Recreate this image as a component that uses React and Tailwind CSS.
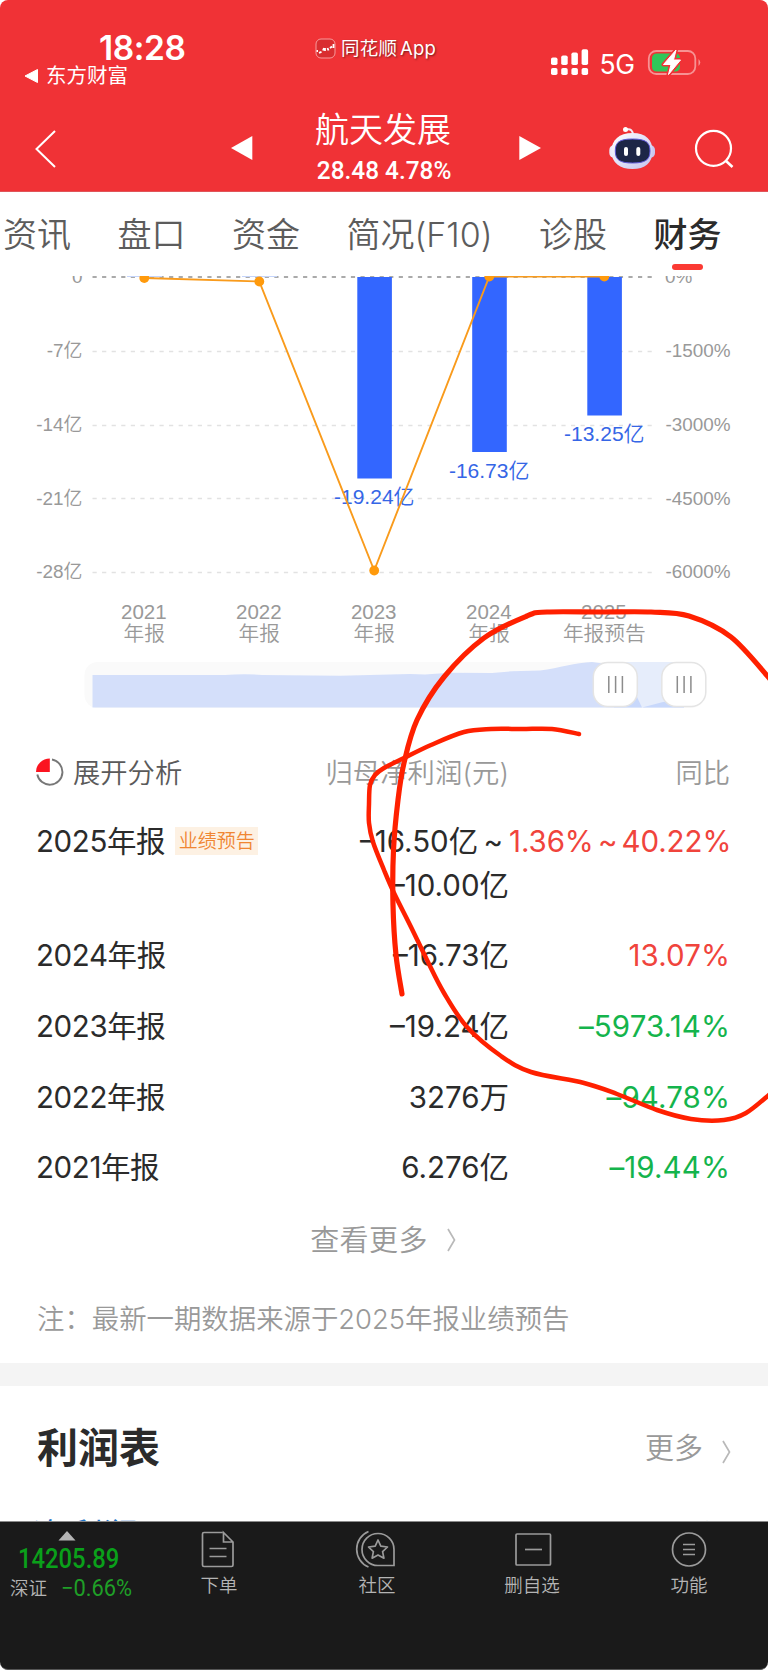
const tabs = ['资讯', '盘口', '资金', '简况(F10)', '诊股'];

const gridRows = [
  { y: 351.5, left: '-7亿', right: '-1500%', base: 357 },
  { y: 425.5, left: '-14亿', right: '-3000%', base: 431 },
  { y: 498.5, left: '-21亿', right: '-4500%', base: 504.5 },
  { y: 572.5, left: '-28亿', right: '-6000%', base: 578 },
];

const bars = [
  { x: 357.3, bottom: 478.5, label: '-19.24亿', base: 504 },
  { x: 472.2, bottom: 452, label: '-16.73亿', base: 478 },
  { x: 587.3, bottom: 415.5, label: '-13.25亿', base: 441 },
];

const points = [[144.3, 278], [259.3, 281.5], [374.2, 570.5], [489.3, 276.5], [604.3, 276.5]];

const periods = [
  { x: 144.3, year: '2021', kind: '年报' },
  { x: 259.3, year: '2022', kind: '年报' },
  { x: 374.2, year: '2023', kind: '年报' },
  { x: 489.3, year: '2024', kind: '年报' },
  { x: 604.3, year: '2025', kind: '年报预告' },
];

const rows = [
  { period: '2024年报', value: '–16.73亿', change: '13.07%', up: true },
  { period: '2023年报', value: '–19.24亿', change: '–5973.14%' },
  { period: '2022年报', value: '3276万', change: '–94.78%' },
  { period: '2021年报', value: '6.276亿', change: '–19.44%' },
];

const outerStroke = [
  [402, 994], [396, 955], [393, 905], [393.5, 850], [398, 800], [404, 763], [417, 720], [444, 677], [484, 638],
  [527, 616], [547, 612], [600, 612], [651, 612], [689, 616], [731, 637], [770, 679],
];

const innerStroke = [
  [579, 734], [552, 729], [522, 729], [491, 729], [464, 732], [431, 745], [404, 758], [384, 768], [375, 775], [370, 785],
  [369, 804], [369, 823], [373, 842], [384, 870], [394, 893], [411, 927], [427, 960], [444, 993], [467, 1027],
  [501, 1056], [531, 1072], [584, 1083], [617, 1094], [657, 1110], [691, 1119], [724, 1120], [746, 1113], [770, 1094],
];

// Catmull-Rom through the points, written as cubic beziers
function smooth(pts) {
  let d = `M${pts[0][0]} ${pts[0][1]}`;
  for (let i = 0; i < pts.length - 1; i++) {
    const p0 = pts[i - 1] || pts[i];
    const p1 = pts[i];
    const p2 = pts[i + 1];
    const p3 = pts[i + 2] || p2;
    d += ` C${p1[0] + (p2[0] - p0[0]) / 6} ${p1[1] + (p2[1] - p0[1]) / 6} ${p2[0] - (p3[0] - p1[0]) / 6} ${p2[1] - (p3[1] - p1[1]) / 6} ${p2[0]} ${p2[1]}`;
  }
  return d;
}

function StatusBar() {
  return (
    <div className="flex h-[100px] items-start">
      <div className="w-[315px] shrink-0 pt-[30px] pl-6">
        <div className="pl-[75px] font-['Inter'] text-[33.5px] leading-9 font-semibold tracking-[-0.4px]">18:28</div>
        <div className="flex h-5 items-center">
          <svg className="h-[14px] w-[14px]" viewBox="0 0 14 14">
            <path d="M1 7 L13.5 0.5 V13.5 Z" fill="#fff" stroke="#fff" strokeLinejoin="round" />
          </svg>
          <span className="pl-2 text-[20.5px] leading-5">东方财富</span>
        </div>
      </div>
      <div className="flex w-[236px] shrink-0 items-center pt-[36px]">
        <svg className="h-[21px] w-[21px]" viewBox="0 0 21 21">
          <rect x="1" y="1" width="19" height="19" rx="5" fill="#d92d30" stroke="#f79a9b" />
          <path d="M1.500 13 h1.500 M4 14.800 l2.500 -1 M8 12.500 l1 -2.500 M10 13 v-3 M12.500 10 l1 2.500 M15 10 l2 -1.500 M18.500 6 v4" stroke="#fff" strokeWidth="1.800" />
        </svg>
        <span className="pl-[5px] text-[18.5px] leading-6 tracking-[0.2px] [text-shadow:1px_1px_2px_rgba(0,0,0,0.5)]">同花顺<span className="pl-[3px] font-['Inter'] text-[18.5px]">App</span></span>
      </div>
      <svg className="mt-[49px] h-[27px] w-[38px]" viewBox="0 0 38 27" fill="#fff">
        <rect x="0" y="8.500" width="6.500" height="7.500" rx="1.800" />
        <rect x="10.200" y="6.500" width="6.500" height="9.500" rx="1.800" />
        <rect x="20.400" y="3.500" width="6.500" height="12.500" rx="1.800" />
        <rect x="30.600" y="0.300" width="6.500" height="15.700" rx="1.800" />
        <rect x="0" y="19" width="6.500" height="7" rx="1.800" />
        <rect x="10.200" y="19" width="6.500" height="7" rx="1.800" />
        <rect x="20.400" y="19" width="6.500" height="7" rx="1.800" />
        <rect x="30.600" y="19" width="6.500" height="7" rx="1.800" />
      </svg>
      <span className="mt-[48px] w-[58px] pl-[10.5px] font-['Inter'] text-[26.5px] leading-8 tracking-[-0.4px]">5G</span>
      <svg className="mt-[48px] h-[28px] w-[54px]" viewBox="647 48 54 28">
        <rect x="648.800" y="51" width="46.500" height="23" rx="7.500" fill="none" stroke="#f79293" strokeWidth="1.800" />
        <path d="M698.500 59 q3.500 3.500 0 7 Z" fill="#f79293" />
        <path d="M657 53.500 H675 q5 0 5 5 v8 q0 5 -5 5 H657 q-5 0 -5 -5 v-8 q0 -5 5 -5 Z" fill="#30c759" />
        <path d="M676 50 L663.500 64.500 H671 L668.500 74.500 L680.500 60 H673.500 Z" fill="#fff" stroke="#f03236" strokeWidth="4" strokeLinejoin="round" />
        <path d="M676 50 L663.500 64.500 H671 L668.500 74.500 L680.500 60 H673.500 Z" fill="#fff" stroke="#fff" strokeLinejoin="round" />
      </svg>
    </div>
  );
}

function NavBar() {
  return (
    <div className="flex h-[92px] items-start">
      <svg className="mt-[29px] ml-[34px] h-10 w-6" viewBox="34 129 24 40">
        <path d="M55 131 L36.500 149 L55 167" fill="none" stroke="#fff" strokeWidth="2" />
      </svg>
      <svg className="mt-[34px] ml-[172px] h-7 w-6" viewBox="230 134 24 28">
        <path d="M231 148 L252.300 136 V160 Z" fill="#fff" />
      </svg>
      <div className="ml-[61px] w-[138px]">
        <div className="mt-[9px] h-[41px] text-[34px] leading-[41px] font-[350] whitespace-nowrap">航天发展</div>
        <div className="mt-1 origin-left scale-x-[0.92] pl-0.5 font-['Roboto'] text-[26.5px] leading-8 font-medium whitespace-nowrap">28.48 4.78%</div>
      </div>
      <svg className="mt-[34px] ml-[65px] h-7 w-6" viewBox="518 134 24 28">
        <path d="M519.300 136 L541 148 L519.300 160 Z" fill="#fff" />
      </svg>
      <svg className="mt-[25px] ml-[66px] h-[46px] w-12" viewBox="608 125 48 46">
        <defs>
          <linearGradient id="shell" x1="0" y1="0" x2="1" y2="1">
            <stop offset="0" stopColor="#ffffff" />
            <stop offset="1" stopColor="#c3c3ee" />
          </linearGradient>
        </defs>
        <path d="M626 129.500 q7 -1.500 7 6" fill="none" stroke="#f2e9f6" strokeWidth="2" />
        <circle cx="625.500" cy="129.500" r="2.500" fill="#fff" />
        <rect x="609.300" y="145" width="10" height="13" rx="5" fill="#ebe9fa" />
        <rect x="645" y="145" width="10" height="13" rx="5" fill="#c9c8f0" />
        <path d="M632.500 133 C646 133 652.500 140 652.500 151 C652.500 163 645 169 632.500 169 C620 169 611.500 163 611.500 151 C611.500 140 619 133 632.500 133 Z" fill="url(#shell)" />
        <path d="M632.500 139 C646 139 650 142.500 650 151 C650 160 645 163 632.500 163 C620 163 615.300 160 615.300 151 C615.300 142.500 619 139 632.500 139 Z" fill="#1d2647" stroke="#5c56d6" />
        <rect x="624" y="147" width="4" height="9" rx="2" fill="#fff" />
        <rect x="636.300" y="147" width="4" height="9" rx="2" fill="#fff" />
      </svg>
      <svg className="mt-[29px] ml-[38px] h-10 w-10" viewBox="694 129 40 40">
        <circle cx="713.500" cy="148.300" r="17.500" fill="none" stroke="#fff" strokeWidth="2.200" />
        <path d="M725.500 160.500 L732.500 167" stroke="#fff" strokeWidth="2.600" />
      </svg>
    </div>
  );
}

function Tabs() {
  return (
    <div className="flex h-[84px] gap-[46.5px] pl-[3px] text-[34px] leading-[85px] font-[350] whitespace-nowrap text-[#5c5c5c]">
      {tabs.map((tab) => (
        <div key={tab}>{tab}</div>
      ))}
      <div className="flex flex-col items-center font-medium text-[#2b2b2b]">
        <span className="h-[72px]">财务</span>
        <span className="h-1.5 w-[31px] rounded-full bg-[#fb3a33]" />
      </div>
    </div>
  );
}

function Handle({ x }) {
  return (
    <g>
      <rect x={x} y="662.500" width="44" height="44" rx="14.500" fill="#fff" stroke="#e4e4e4" strokeWidth="1.500" />
      <path d={`M${x + 15.500} 676 v17 M${x + 22.300} 676 v17 M${x + 29.100} 676 v17`} stroke="#8c8c8c" strokeWidth="1.500" />
    </g>
  );
}

function ProfitChart() {
  return (
    <svg className="h-[444px] w-[768px] font-['Liberation_Sans','Noto_Sans_CJK_SC',sans-serif]" viewBox="0 276 768 444">
      <path d="M92.500 277 H656" stroke="#8f8f8f" strokeWidth="1.500" strokeDasharray="4.200 5.370" />
      <rect x="127" y="276" width="35" height="1" fill="#c5d5fb" />
      <rect x="242" y="276" width="35" height="1" fill="#c5d5fb" />
      <g fill="#999" fontSize="18.900" fontWeight="350">
        <text x="82.500" y="283" textAnchor="end">0</text>
        <text x="665" y="283">0%</text>
        {gridRows.map((row) => (
          <g key={row.left}>
            <path d={`M92.500 ${row.y} H656`} stroke="#e2e2e2" strokeWidth="1.400" strokeDasharray="4.200 5.370" />
            <text x="82.500" y={row.base} textAnchor="end">{row.left}</text>
            <text x="665.500" y={row.base}>{row.right}</text>
          </g>
        ))}
      </g>
      {bars.map((bar) => (
        <g key={bar.label}>
          <rect x={bar.x} y="277" width="34.600" height={bar.bottom - 277} fill="#3366ff" />
          <text x={bar.x + 17} y={bar.base} textAnchor="middle" fontSize="21" fontWeight="350" fill="#3566e6">{bar.label}</text>
        </g>
      ))}
      <polyline points={points.map((p) => p.join(',')).join(' ')} fill="none" stroke="#f99b1c" strokeWidth="1.900" />
      {points.map(([x, y]) => (
        <circle key={x} cx={x} cy={y} r="4.900" fill="#ff9a0c" />
      ))}
      <g fill="#999" fontSize="20.500" fontWeight="350" textAnchor="middle">
        {periods.map((p) => (
          <g key={p.year}>
            <text x={p.x - 0.5} y="619">{p.year}</text>
            <text x={p.x} y="640.500" fontSize="20.700">{p.kind}</text>
          </g>
        ))}
      </g>
      <rect x="84.500" y="662" width="620" height="46" rx="13" fill="#fafafa" />
      <rect x="614" y="662" width="70" height="45.500" fill="#e6edfb" />
      <path d="M92.500 675 L225 675 Q245 673.500 262 675 L340 675.800 L410 674 L425 674.500 L450 672.800 L492 673 L512 671.200 L540 670.500 C560 668 575 662.500 592 662 L614 665 V707.500 H92.500 Z" fill="#d4dffa" />
      <path d="M614 665 L637 697 L642 707.500 H614 Z" fill="#c8d8fb" />
      <path d="M642 707.500 L663 702 L684 700 V707.500 Z" fill="#c8d8fb" />
      <Handle x={593.3} />
      <Handle x={661.8} />
    </svg>
  );
}

function Chevron() {
  return (
    <svg className="h-6 w-[9px]" viewBox="0 0 9 24">
      <path d="M1 1 L7.500 12 L1 23" fill="none" stroke="#b9b9b9" strokeWidth="1.700" />
    </svg>
  );
}

function ProfitTable() {
  return (
    <div className="flex flex-col pr-[38px] pl-9 text-[29.5px] text-[#2b2b2b]">
      <div className="flex h-[100px] items-center pt-[8px] text-[27.3px] font-[350] text-[#999]">
        <div className="flex w-[180px] items-center gap-[9px] text-[#5a5a5a]">
          <svg className="-mt-1 h-7 w-7 shrink-0" viewBox="0 0 28 28">
            <path d="M16 1.500 A12.700 12.700 0 1 1 1.300 16.500" fill="none" stroke="#777" strokeWidth="1.900" />
            <path d="M13.800 0.500 V14 H0 A13.800 13.500 0 0 1 13.800 0.500 Z" fill="#fb1420" />
          </svg>
          <span className="whitespace-nowrap">展开分析</span>
        </div>
        <div className="w-[293px] text-right tracking-[0.1px]">归母净利润(元)</div>
        <div className="flex-1 text-right">同比</div>
      </div>

      <div className="-mt-px flex h-[101px] items-start leading-[44px]">
        <div className="flex w-[241px] shrink-0 items-center gap-2.5 whitespace-nowrap">
          <span className="tracking-[-0.4px]">2025年报</span>
          <span className="h-7 w-[83px] bg-[#fdf1e3] text-center text-[19px] leading-[29px] font-[350] text-[#f08632]">业绩预告</span>
        </div>
        <div className="w-[232px] shrink-0 text-right">
          <div className="pr-1.5 [word-spacing:-3px]">–16.50亿 ~</div>
          <div>–10.00亿</div>
        </div>
        <div className="flex-1 text-right tracking-[-0.1px] whitespace-nowrap text-[#f0443c] [word-spacing:-4px]">1.36% ~ 40.22%</div>
      </div>

      {rows.map((row) => (
        <div key={row.period} className="flex h-[70.7px] items-center">
          <div className="w-[180px] tracking-[-0.4px]">{row.period}</div>
          <div className="w-[293px] text-right">{row.value}</div>
          <div className={`flex-1 text-right tracking-[0.1px] ${row.up ? 'text-[#f0443c]' : 'text-[#14b44c]'}`}>{row.change}</div>
        </div>
      ))}

      <div className="flex h-[74px] items-center justify-center gap-[19px] pt-px text-[29px] font-[350] text-[#999]">
        <span className="tracking-[0.4px]">查看更多</span>
        <Chevron />
      </div>
      <div className="h-[86px] pl-px text-[27.4px] leading-[84px] font-[350] whitespace-nowrap text-[#999]">
        注：最新一期数据来源于2025年报业绩预告
      </div>
    </div>
  );
}

function IncomeStatement() {
  return (
    <div className="flex h-[135px] flex-col overflow-hidden pr-[37px] pl-[37px]">
      <div className="flex h-[125px] shrink-0 items-center justify-between pt-px">
        <span className="text-[41px] font-bold text-[#2b2b2b]">利润表</span>
        <span className="flex items-center gap-[19px] text-[29px] font-[350] text-[#999]">
          更多
          <span className="flex pt-1.5"><Chevron /></span>
        </span>
      </div>
      <div className="mt-1 -ml-1 flex h-7 shrink-0 items-start justify-between pr-0.5 text-[35px] leading-[42px] font-[350]">
        <span className="text-[#1f74c8]">净利润</span>
        <span className="text-[31px] text-[#2b2b2b]">亿</span>
      </div>
    </div>
  );
}

function BottomItem({ label, className, children }) {
  return (
    <div className={`flex flex-col items-center text-[18.5px] leading-6 font-[350] text-[#b4b4b4] ${className}`}>
      <svg className="mt-2 h-10 w-10 overflow-visible" viewBox="0 0 40 40" fill="none" stroke="#9b9b9b" strokeWidth="1.700">
        {children}
      </svg>
      <span className="mt-[3px] whitespace-nowrap">{label}</span>
    </div>
  );
}

function BottomBar() {
  return (
    <div className="flex h-[149px] items-start rounded-b-lg border-t border-b border-t-[#8a8a8a] border-b-[#555] bg-[#1a1a1a]">
      <div className="w-[189px] shrink-0 pt-[9px]">
        <svg className="ml-[58px] h-2.5 w-[18px]" viewBox="0 0 18 10">
          <path d="M0.500 9.500 L9 0 L17.500 9.500 Z" fill="#b5b5b5" />
        </svg>
        <div className="mt-0.5 ml-[18px] origin-left scale-x-[0.85] font-['Roboto'] text-[28px] leading-8 font-medium text-[#0aa01a]">14205.89</div>
        <div className="flex h-7 items-center pl-[10px]">
          <span className="w-[51px] text-[18.5px] font-[350] text-[#b4b4b4]">深证</span>
          <span className="origin-left scale-x-[0.95] font-['Roboto'] text-[23px] leading-7 whitespace-nowrap text-[#1f9f27]">−0.66%</span>
        </div>
      </div>
      <BottomItem label="下单" className="w-[60px]">
        <path d="M23.500 2.500 H5 q-1.500 0 -1.500 1.500 V35 q0 1.500 1.500 1.500 H32.500 q1.500 0 1.500 -1.500 V12 L24.500 2.500 V12 H34 M10.500 18.500 H27.500 M10.500 26.500 H27.500" />
      </BottomItem>
      <BottomItem label="社区" className="ml-[98px] w-[60px]">
        <path d="M37 35.500 H21 A16 16 0 1 1 37 19.500 V35.500 Z" />
        <path d="M11.500 1.500 A19.250 19.250 0 0 0 11.500 37" />
        <path d="M21 10 L23.800 16.200 L30.500 17 L25.600 21.600 L26.900 28.200 L21 25 L15.100 28.200 L16.400 21.600 L11.500 17 L18.200 16.200 Z" strokeLinejoin="round" />
      </BottomItem>
      <BottomItem label="删自选" className="ml-[95px] w-[60px]">
        <rect x="4" y="4" width="34.500" height="31" rx="1" />
        <path d="M13 19.500 H30" />
      </BottomItem>
      <BottomItem label="功能" className="ml-[97px] w-[60px]">
        <circle cx="20" cy="19.500" r="16.500" />
        <path d="M14 14.500 H26 M14 19.500 H26 M14 24.500 H26" />
      </BottomItem>
    </div>
  );
}

export default function App() {
  return (
    <div className="relative flex h-[1670px] w-[768px] flex-col overflow-hidden bg-white font-['Inter','Noto_Sans_CJK_SC',sans-serif]">
      <header className="h-[192px] shrink-0 rounded-t-lg border-b border-[#e0555a] bg-[#f03236] text-white">
        <StatusBar />
        <NavBar />
      </header>
      <Tabs />
      <ProfitChart />
      <ProfitTable />
      <div className="h-[23px] shrink-0 bg-[#f4f4f4]" />
      <IncomeStatement />
      <BottomBar />
      <svg className="pointer-events-none absolute top-0 left-0 h-[1670px] w-[768px]" viewBox="0 0 768 1670" fill="none" stroke="#ff2000" strokeLinecap="round">
        <path d={smooth(outerStroke)} strokeWidth="5.200" />
        <path d={smooth(innerStroke)} strokeWidth="4.500" />
      </svg>
    </div>
  );
}
